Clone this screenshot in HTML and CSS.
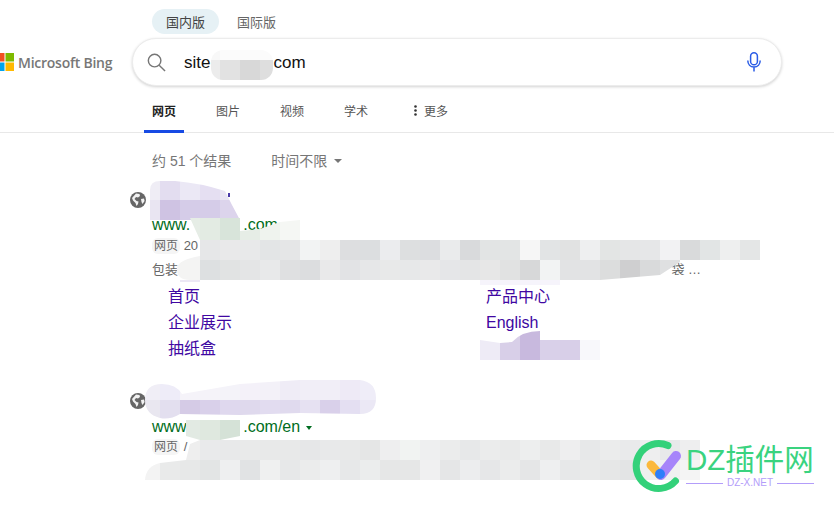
FILE: index.html
```html
<!DOCTYPE html>
<html lang="zh-CN">
<head>
    <meta charset="UTF-8">
    <title>site - 搜索</title>
    <link rel="stylesheet" href="styles.css">
</head>
<body>
    <div class="page">
        <div class="regionTabs">
            <span class="regionTab regionTabActive">国内版</span>
            <span class="regionTab">国际版</span>
        </div>

        <div class="searchRow">
            <div class="brand">
                <svg class="brandLogo" width="18" height="18" viewBox="0 0 18 18">
                    <rect width="8.5" height="8.5" fill="#f25022"/>
                    <rect x="9.5" width="8.5" height="8.5" fill="#7fba00"/>
                    <rect y="9.5" width="8.5" height="8.5" fill="#00a4ef"/>
                    <rect x="9.5" y="9.5" width="8.5" height="8.5" fill="#ffb900"/>
                </svg>
                <span class="brandName">Microsoft Bing</span>
            </div>
            <div class="searchBox">
                <svg class="searchIcon" width="19" height="19" viewBox="0 0 20 20" fill="none" stroke="#767676" stroke-width="1.5">
                    <circle cx="8" cy="8" r="6.6"/>
                    <path d="M12.8 12.8 L19 19"/>
                </svg>
                <span class="searchText">site<span class="searchGap"></span>com</span>
                <svg class="micIcon" width="14" height="20" viewBox="0 0 14 20" fill="none" stroke="#2a5ce6" stroke-width="1.5">
                    <rect x="3.6" y="0.8" width="6.8" height="12" rx="3.4"/>
                    <path d="M0.8 8.5 C0.8 12.5 3.4 15 7 15 C10.6 15 13.2 12.5 13.2 8.5 M7 15 V19.5"/>
                </svg>
            </div>
        </div>

        <nav class="mainNav">
            <a class="navItem navItemActive">网页</a>
            <a class="navItem">图片</a>
            <a class="navItem">视频</a>
            <a class="navItem">学术</a>
            <a class="navItem navMore">
                <svg class="moreDots" width="3" height="11" viewBox="0 0 3 11" fill="#333">
                    <circle cx="1.5" cy="1.5" r="1.3"/>
                    <circle cx="1.5" cy="5.5" r="1.3"/>
                    <circle cx="1.5" cy="9.5" r="1.3"/>
                </svg>更多
            </a>
        </nav>

        <div class="resultInfo">
            <span>约 51 个结果</span>
            <span class="timeFilter">时间不限<i class="caretGray"></i></span>
        </div>

        <div class="result resultFirst">
            <div class="resultTitle">
                <svg class="globeIcon" width="16" height="16" viewBox="0 0 16 16">
                    <circle cx="8" cy="8" r="8" fill="#666"/>
                    <path d="M6 1.5 L9.5 2 L10 4 L8 5.5 L6 5 L4.5 7 L6.5 9 L8.5 9.5 L8 12 L6.5 14 L5.5 11 L3 8.5 L2 6 Z M11 7 L14 6.5 L14.6 9 L12.5 12 L11.5 10 Z" fill="#f2f2f2"/>
                </svg>
                <a class="titleLink">&nbsp;</a>
            </div>
            <div class="resultUrl">www.<span class="urlGap"></span>.com</div>
            <div class="resultMeta"><span class="metaTag">网页</span> 20</div>
            <div class="resultSnippet"><span>包装</span><span>袋 …</span></div>
            <div class="siteLinks">
                <a>首页</a>
                <a>产品中心</a>
                <a>企业展示</a>
                <a>English</a>
                <a>抽纸盒</a>
            </div>
        </div>

        <div class="result resultSecond">
            <div class="resultTitle">
                <svg class="globeIcon" width="16" height="16" viewBox="0 0 16 16">
                    <circle cx="8" cy="8" r="8" fill="#666"/>
                    <path d="M6 1.5 L9.5 2 L10 4 L8 5.5 L6 5 L4.5 7 L6.5 9 L8.5 9.5 L8 12 L6.5 14 L5.5 11 L3 8.5 L2 6 Z M11 7 L14 6.5 L14.6 9 L12.5 12 L11.5 10 Z" fill="#f2f2f2"/>
                </svg>
                <a class="titleLink">&nbsp;</a>
            </div>
            <div class="resultUrl">www.<span class="urlGap"></span>.com/en<i class="caretGreen"></i></div>
            <div class="resultMeta"><span class="metaTag">网页</span> /</div>
        </div>

        <!-- 打码区域 -->
        <svg class="mosaic" width="834" height="506" viewBox="0 0 834 506" shape-rendering="crispEdges">
            <defs>
                <clipPath id="clipSearch"><rect x="211" y="50" width="62" height="30" rx="12"/></clipPath>
                <clipPath id="clipTitleOne"><path d="M150 190 Q150 181 160 181 L175 181 Q200 183 225 191 L232 205 L240 220 L150 220 Z"/></clipPath>
                <clipPath id="clipGreenOne"><path d="M190 218 H240 V231 L260 229 L280 222 L300 220 V240 H200 Z"/></clipPath>
                <clipPath id="clipRowOne"><path d="M200 240 H760 V260 H680 L680 262 L660 275 L600 280 H190 Q176 280 177 268 Q178 260 200 256 Z"/></clipPath>
                <clipPath id="clipProduct"><path d="M480 340 L500 343 L512 342 Q522 331 540 331 V340 H600 V360 H480 Z"/></clipPath>
                <clipPath id="clipTitleTwo"><path d="M145 400 Q145 384 162 384 Q176 384 182 394 L240 384 L300 380 H360 Q376 382 376 398 Q376 414 360 414 L300 413 L240 415 L180 414 Q170 420 160 418 Q145 414 145 400 Z"/></clipPath>
                <clipPath id="clipGreenTwo"><path d="M186 420 H240 V436 L220 440 H200 L186 436 Z"/></clipPath>
                <clipPath id="clipRowTwo"><path d="M200 440 H700 V480 H145 Q146 466 160 463 L186 460 L190 444 Z"/></clipPath>
            </defs>

            <rect x="152" y="209" width="6" height="2" fill="#3a2aa0"/>
            <rect x="228" y="193" width="2" height="4" fill="#4a3aa8"/>

            <g clip-path="url(#clipSearch)">
                <rect x="200" y="50" width="20" height="10" fill="#f8f8f8"/>
                <rect x="220" y="50" width="60" height="10" fill="#fbfbfb"/>
                <rect x="200" y="60" width="20" height="20" fill="#ececec"/>
                <rect x="220" y="60" width="20" height="20" fill="#e2e2e2"/>
                <rect x="240" y="60" width="20" height="20" fill="#d8d8d8"/>
                <rect x="260" y="60" width="20" height="20" fill="#dedede"/>
            </g>

            <g clip-path="url(#clipTitleOne)">
                <rect x="150" y="180" width="10" height="20" fill="#efedf5"/>
                <rect x="160" y="180" width="20" height="20" fill="#e3ddf0"/>
                <rect x="180" y="180" width="20" height="20" fill="#ebe8f5"/>
                <rect x="200" y="180" width="20" height="20" fill="#e5dff2"/>
                <rect x="220" y="180" width="20" height="20" fill="#e9e5f3"/>
                <rect x="150" y="200" width="10" height="20" fill="#e9e5f2"/>
                <rect x="160" y="200" width="20" height="20" fill="#cfc3e3"/>
                <rect x="180" y="200" width="20" height="20" fill="#d5cce8"/>
                <rect x="200" y="200" width="20" height="20" fill="#d5cce8"/>
                <rect x="220" y="200" width="20" height="20" fill="#dcd4ec"/>
            </g>

            <g clip-path="url(#clipGreenOne)">
                <rect x="180" y="215" width="20" height="25" fill="#e6ede6"/>
                <rect x="200" y="215" width="20" height="25" fill="#e3ebe3"/>
                <rect x="220" y="215" width="20" height="25" fill="#d8e4da"/>
                <rect x="240" y="215" width="20" height="25" fill="#e6ede6"/>
                <rect x="260" y="215" width="20" height="25" fill="#eff3ee"/>
                <rect x="280" y="215" width="20" height="25" fill="#f5f7f4"/>
            </g>

            <g clip-path="url(#clipRowOne)">
                <rect x="180" y="240" width="20" height="20" fill="#f3f3f3"/>
                <rect x="200" y="240" width="20" height="20" fill="#e6e7e8"/>
                <rect x="220" y="240" width="20" height="20" fill="#e9e9ea"/>
                <rect x="240" y="240" width="20" height="20" fill="#e8e9ea"/>
                <rect x="260" y="240" width="20" height="20" fill="#e3e5e6"/>
                <rect x="280" y="240" width="20" height="20" fill="#e5e6e7"/>
                <rect x="300" y="240" width="20" height="20" fill="#f2f3f3"/>
                <rect x="320" y="240" width="20" height="20" fill="#eeeeee"/>
                <rect x="340" y="240" width="20" height="20" fill="#dddee0"/>
                <rect x="360" y="240" width="20" height="20" fill="#dcdee0"/>
                <rect x="380" y="240" width="20" height="20" fill="#ebecee"/>
                <rect x="400" y="240" width="20" height="20" fill="#dddfe0"/>
                <rect x="420" y="240" width="20" height="20" fill="#dcdde0"/>
                <rect x="440" y="240" width="20" height="20" fill="#eaebec"/>
                <rect x="460" y="240" width="20" height="20" fill="#d9dadc"/>
                <rect x="480" y="240" width="20" height="20" fill="#e2e4e4"/>
                <rect x="500" y="240" width="20" height="20" fill="#e3e5e5"/>
                <rect x="520" y="240" width="20" height="20" fill="#f6f6f6"/>
                <rect x="540" y="240" width="20" height="20" fill="#e2e4e5"/>
                <rect x="560" y="240" width="20" height="20" fill="#e1e2e2"/>
                <rect x="580" y="240" width="20" height="20" fill="#eeeff0"/>
                <rect x="600" y="240" width="20" height="20" fill="#e3e5e4"/>
                <rect x="620" y="240" width="20" height="20" fill="#e5e6e7"/>
                <rect x="640" y="240" width="20" height="20" fill="#e6e7e8"/>
                <rect x="660" y="240" width="20" height="20" fill="#f2f2f3"/>
                <rect x="680" y="240" width="20" height="20" fill="#d9dadb"/>
                <rect x="700" y="240" width="20" height="20" fill="#e2e5e5"/>
                <rect x="720" y="240" width="20" height="20" fill="#eeefef"/>
                <rect x="740" y="240" width="20" height="20" fill="#e4e6e6"/>

                <rect x="170" y="260" width="30" height="20" fill="#f4f4f3"/>
                <rect x="200" y="260" width="20" height="20" fill="#dde0e1"/>
                <rect x="220" y="260" width="20" height="20" fill="#e1e3e3"/>
                <rect x="240" y="260" width="20" height="20" fill="#e4e5e6"/>
                <rect x="260" y="260" width="20" height="20" fill="#e8e9ea"/>
                <rect x="280" y="260" width="20" height="20" fill="#dfe0e1"/>
                <rect x="300" y="260" width="20" height="20" fill="#dcdddf"/>
                <rect x="320" y="260" width="20" height="20" fill="#e9e9ea"/>
                <rect x="340" y="260" width="20" height="20" fill="#e2e3e5"/>
                <rect x="360" y="260" width="20" height="20" fill="#e6e7e8"/>
                <rect x="380" y="260" width="20" height="20" fill="#e8e9e9"/>
                <rect x="400" y="260" width="20" height="20" fill="#e7e8e9"/>
                <rect x="420" y="260" width="20" height="20" fill="#e9e9ea"/>
                <rect x="440" y="260" width="20" height="20" fill="#e5e6e8"/>
                <rect x="460" y="260" width="20" height="20" fill="#e4e5e6"/>
                <rect x="480" y="260" width="20" height="20" fill="#e7e7e7"/>
                <rect x="500" y="260" width="20" height="20" fill="#e1e2e2"/>
                <rect x="520" y="260" width="20" height="20" fill="#d7d8d9"/>
                <rect x="540" y="260" width="20" height="20" fill="#f2f3f3"/>
                <rect x="560" y="260" width="20" height="20" fill="#e2e3e4"/>
                <rect x="580" y="260" width="20" height="20" fill="#e2e3e4"/>
                <rect x="600" y="260" width="20" height="20" fill="#dcdddd"/>
                <rect x="620" y="260" width="20" height="20" fill="#cfcfd0"/>
                <rect x="640" y="260" width="20" height="20" fill="#d9dadb"/>
                <rect x="660" y="260" width="20" height="20" fill="#dfe0e1"/>
            </g>

            <rect x="660" y="275" width="50" height="8" fill="#fff"/>
            <rect x="480" y="280" width="80" height="5" fill="#f6f4fb"/>
            <rect x="180" y="280" width="20" height="2" fill="#ece8f5"/>

            <g clip-path="url(#clipProduct)">
                <rect x="480" y="331" width="20" height="29" fill="#eeebf6"/>
                <rect x="500" y="331" width="20" height="29" fill="#d8cfe8"/>
                <rect x="520" y="331" width="20" height="29" fill="#c8b9de"/>
                <rect x="540" y="331" width="20" height="29" fill="#d9d0e9"/>
                <rect x="560" y="331" width="20" height="29" fill="#d8cfe8"/>
                <rect x="580" y="331" width="20" height="29" fill="#f8f8fb"/>
            </g>

            <g clip-path="url(#clipTitleTwo)">
                <rect x="140" y="380" width="20" height="20" fill="#f0eef6"/>
                <rect x="160" y="380" width="20" height="20" fill="#eeecf8"/>
                <rect x="180" y="380" width="20" height="20" fill="#f5f3f9"/>
                <rect x="200" y="380" width="20" height="20" fill="#f5f3f9"/>
                <rect x="220" y="380" width="20" height="20" fill="#f4f3f9"/>
                <rect x="240" y="380" width="20" height="20" fill="#f4f1f9"/>
                <rect x="260" y="380" width="20" height="20" fill="#f3f1f8"/>
                <rect x="280" y="380" width="20" height="20" fill="#efecf6"/>
                <rect x="300" y="380" width="20" height="20" fill="#f1eef7"/>
                <rect x="320" y="380" width="20" height="20" fill="#f1eef7"/>
                <rect x="340" y="380" width="20" height="20" fill="#eeeaf6"/>
                <rect x="360" y="380" width="20" height="20" fill="#efedf8"/>
                <rect x="140" y="400" width="20" height="20" fill="#e9e7f0"/>
                <rect x="160" y="400" width="20" height="20" fill="#e3dfef"/>
                <rect x="180" y="400" width="20" height="20" fill="#d5cbe6"/>
                <rect x="200" y="400" width="20" height="20" fill="#d9d0ea"/>
                <rect x="220" y="400" width="20" height="20" fill="#dfd8ee"/>
                <rect x="240" y="400" width="20" height="20" fill="#dfd9ed"/>
                <rect x="260" y="400" width="20" height="20" fill="#e2dcf0"/>
                <rect x="280" y="400" width="20" height="20" fill="#e0daee"/>
                <rect x="300" y="400" width="20" height="20" fill="#e6e1f2"/>
                <rect x="320" y="400" width="20" height="20" fill="#d9d0ea"/>
                <rect x="340" y="400" width="20" height="20" fill="#e4dff2"/>
                <rect x="360" y="400" width="20" height="20" fill="#ebe8f5"/>
            </g>

            <g clip-path="url(#clipGreenTwo)">
                <rect x="180" y="420" width="20" height="20" fill="#e2eae3"/>
                <rect x="200" y="420" width="20" height="20" fill="#dfe8df"/>
                <rect x="220" y="420" width="20" height="20" fill="#d5e2d7"/>
            </g>

            <g clip-path="url(#clipRowTwo)">
                <rect x="180" y="440" width="20" height="20" fill="#eeeeee"/>
                <rect x="200" y="440" width="20" height="20" fill="#e9eaeb"/>
                <rect x="220" y="440" width="20" height="20" fill="#e8e9ea"/>
                <rect x="240" y="440" width="20" height="20" fill="#e9eaea"/>
                <rect x="260" y="440" width="20" height="20" fill="#e8e9e9"/>
                <rect x="280" y="440" width="20" height="20" fill="#e8e9e9"/>
                <rect x="300" y="440" width="20" height="20" fill="#e6e7e8"/>
                <rect x="320" y="440" width="20" height="20" fill="#e8e9ea"/>
                <rect x="340" y="440" width="20" height="20" fill="#e8e9e9"/>
                <rect x="360" y="440" width="20" height="20" fill="#e5e6e6"/>
                <rect x="380" y="440" width="20" height="20" fill="#eeeeef"/>
                <rect x="400" y="440" width="20" height="20" fill="#f1f3f2"/>
                <rect x="420" y="440" width="20" height="20" fill="#eeeff0"/>
                <rect x="440" y="440" width="20" height="20" fill="#ebecec"/>
                <rect x="460" y="440" width="20" height="20" fill="#e7e8e9"/>
                <rect x="480" y="440" width="20" height="20" fill="#ebecec"/>
                <rect x="500" y="440" width="20" height="20" fill="#e9eaea"/>
                <rect x="520" y="440" width="20" height="20" fill="#edeeee"/>
                <rect x="540" y="440" width="20" height="20" fill="#e8e9e9"/>
                <rect x="560" y="440" width="20" height="20" fill="#eeeeef"/>
                <rect x="580" y="440" width="20" height="20" fill="#e7e8e9"/>
                <rect x="600" y="440" width="20" height="20" fill="#ebecec"/>
                <rect x="620" y="440" width="20" height="20" fill="#e9eaeb"/>
                <rect x="640" y="440" width="20" height="20" fill="#eeeeef"/>
                <rect x="660" y="440" width="20" height="20" fill="#e8e9ea"/>
                <rect x="680" y="440" width="20" height="20" fill="#eeeeef"/>

                <rect x="140" y="460" width="20" height="20" fill="#f3f3f3"/>
                <rect x="160" y="460" width="20" height="20" fill="#e9eaea"/>
                <rect x="180" y="460" width="20" height="20" fill="#e7e8e8"/>
                <rect x="200" y="460" width="20" height="20" fill="#e3e5e5"/>
                <rect x="220" y="460" width="20" height="20" fill="#eeeff0"/>
                <rect x="240" y="460" width="20" height="20" fill="#e1e3e4"/>
                <rect x="260" y="460" width="20" height="20" fill="#eff0f0"/>
                <rect x="280" y="460" width="20" height="20" fill="#e7e8e9"/>
                <rect x="300" y="460" width="20" height="20" fill="#ebecec"/>
                <rect x="320" y="460" width="20" height="20" fill="#eeeff0"/>
                <rect x="340" y="460" width="20" height="20" fill="#e7e8e9"/>
                <rect x="360" y="460" width="20" height="20" fill="#ebeded"/>
                <rect x="380" y="460" width="20" height="20" fill="#e6e7e7"/>
                <rect x="400" y="460" width="20" height="20" fill="#e6e7e7"/>
                <rect x="420" y="460" width="20" height="20" fill="#f0f0f1"/>
                <rect x="440" y="460" width="20" height="20" fill="#e5e6e7"/>
                <rect x="460" y="460" width="20" height="20" fill="#ecedee"/>
                <rect x="480" y="460" width="20" height="20" fill="#e6e7e8"/>
                <rect x="500" y="460" width="20" height="20" fill="#ebecec"/>
                <rect x="520" y="460" width="20" height="20" fill="#e5e6e7"/>
                <rect x="540" y="460" width="20" height="20" fill="#eeeff0"/>
                <rect x="560" y="460" width="20" height="20" fill="#e7e8e9"/>
                <rect x="580" y="460" width="20" height="20" fill="#e9eaea"/>
                <rect x="600" y="460" width="20" height="20" fill="#e6e7e7"/>
                <rect x="620" y="460" width="20" height="20" fill="#e3e4e5"/>
                <rect x="640" y="460" width="20" height="20" fill="#eef0ef"/>
                <rect x="660" y="460" width="20" height="20" fill="#f0f1f1"/>
                <rect x="680" y="460" width="20" height="20" fill="#f4f4f4"/>
            </g>
        </svg>

        <!-- 水印 -->
        <div class="watermark">
            <svg class="watermarkLogo" width="54" height="54" viewBox="0 0 54 54" fill="none" stroke-linecap="round">
                <path d="M36 6.5 A22.5 22.5 0 1 0 43.5 42" stroke="#33d17a" stroke-width="7"/>
                <path d="M19 26 L28 36" stroke="#fbb93c" stroke-width="9"/>
                <path d="M29 36 L44 17" stroke="#a685fa" stroke-width="10"/>
                <circle cx="28" cy="35" r="5" fill="#2d7ff9"/>
            </svg>
            <div class="watermarkText">
                <div class="watermarkName">DZ插件网</div>
                <div class="watermarkUrl"><i></i><span>DZ-X.NET</span><i></i></div>
            </div>
        </div>
    </div>
</body>
</html>
```

FILE: styles.css
```css
* {
    box-sizing: border-box;
}

html, body {
    margin: 0;
    padding: 0;
    background-color: #fff;
}

body {
    font-family: "Liberation Sans", "Noto Sans CJK SC", sans-serif;
    color: #444;
    overflow: hidden;
}

.page {
    position: relative;
    width: 834px;
    height: 506px;
    overflow: hidden;
}

/* 顶部 国内版/国际版 */
.regionTabs {
    display: flex;
    align-items: center;
    gap: 18px;
    height: 25px;
    margin-top: 9px;
    margin-left: 152px;
    font-size: 13px;
}

.regionTab {
    color: #666;
}

.regionTabActive {
    display: flex;
    align-items: center;
    justify-content: center;
    width: 67px;
    height: 25px;
    border-radius: 13px;
    background-color: #e6f1f5;
    color: #444;
}

/* logo + 搜索框 */
.searchRow {
    display: flex;
    align-items: center;
    height: 48px;
    margin-top: 4px;
    margin-left: -4px;
}

.brand {
    display: flex;
    align-items: center;
    gap: 4px;
    width: 136px;
    flex-shrink: 0;
}

.brandName {
    font-family: "Open Sans", "Liberation Sans", sans-serif;
    font-size: 14px;
    font-weight: 600;
    letter-spacing: -0.25px;
    color: #777;
    white-space: nowrap;
}

.searchBox {
    display: flex;
    align-items: center;
    width: 650px;
    height: 48px;
    padding-left: 14px;
    padding-right: 20px;
    border: 1px solid #ececec;
    border-radius: 24px;
    box-shadow: 0 1px 3px rgba(0, 0, 0, 0.18);
    background-color: #fff;
}

.searchIcon {
    flex-shrink: 0;
}

.searchText {
    margin-left: 18px;
    padding-top: 2px;
    font-size: 17px;
    color: #111;
    white-space: nowrap;
}

.searchGap {
    display: inline-block;
    width: 63px;
}

.micIcon {
    margin-left: auto;
}

/* 导航 */
.mainNav {
    display: flex;
    gap: 40px;
    height: 47px;
    padding-left: 152px;
    border-bottom: 1px solid #e8e8e8;
    font-size: 12px;
}

.navItem {
    position: relative;
    display: flex;
    align-items: center;
    height: 46px;
    padding-top: 2px;
    color: #555;
}

.navItemActive {
    color: #222;
    font-weight: bold;
}

.navItemActive::after {
    content: "";
    position: absolute;
    left: -8px;
    right: -8px;
    bottom: -1px;
    height: 3px;
    background-color: #174ae4;
}

.navMore {
    margin-left: 6px;
}

.moreDots {
    margin-right: 7px;
}

/* 结果数 */
.resultInfo {
    display: flex;
    gap: 40px;
    height: 20px;
    margin-top: 18px;
    margin-left: 152px;
    font-size: 14px;
    line-height: 20px;
    color: #767676;
}

.timeFilter {
    display: flex;
    align-items: center;
}

.caretGray {
    width: 0;
    height: 0;
    margin-left: 7px;
    border-left: 4px solid transparent;
    border-right: 4px solid transparent;
    border-top: 4px solid #767676;
}

/* 结果 */
.result {
    padding-left: 130px;
}

.resultFirst {
    margin-top: 17px;
}

.resultSecond {
    margin-top: 27px;
}

.resultTitle {
    display: flex;
    align-items: center;
    gap: 6px;
    height: 24px;
}

.titleLink {
    font-size: 16px;
    color: #4007a2;
}

.resultUrl {
    height: 21px;
    margin-top: 2px;
    padding-left: 22px;
    font-size: 16px;
    line-height: 21px;
    color: #006d21;
    white-space: nowrap;
}

.resultSecond .resultUrl {
    margin-top: 3px;
}

.urlGap {
    display: inline-block;
    width: 53px;
}

.caretGreen {
    display: inline-block;
    width: 0;
    height: 0;
    margin-left: 6px;
    margin-bottom: 2px;
    border-left: 3.5px solid transparent;
    border-right: 3.5px solid transparent;
    border-top: 4px solid #006d21;
}

.resultMeta {
    height: 22px;
    padding-left: 22px;
    font-size: 13px;
    line-height: 22px;
    color: #666;
}

.resultSecond .resultMeta {
    margin-top: -1px;
}

.metaTag {
    display: inline-block;
    height: 16px;
    padding: 0 2px;
    border-radius: 6px;
    background-color: #f5f5f5;
    font-size: 12px;
    line-height: 16px;
}

.resultSnippet {
    display: flex;
    justify-content: space-between;
    width: 549px;
    height: 24px;
    margin-top: 1px;
    margin-left: 22px;
    font-size: 13px;
    line-height: 24px;
    color: #666;
}

.siteLinks {
    display: grid;
    grid-template-columns: 318px 318px;
    margin-top: 2px;
    padding-left: 38px;
    font-size: 16px;
    line-height: 26px;
    color: #4007a2;
}

/* 打码 */
.mosaic {
    position: absolute;
    left: 0;
    top: 0;
    pointer-events: none;
}

/* 水印 */
.watermark {
    position: absolute;
    left: 632px;
    top: 439px;
    display: flex;
}

.watermarkText {
    width: 128px;
    padding-top: 4px;
}

.watermarkName {
    font-size: 29.5px;
    line-height: 34px;
    color: #3ad37f;
    white-space: nowrap;
}

.watermarkUrl {
    display: flex;
    align-items: center;
    gap: 4px;
    height: 12px;
    font-size: 10px;
    line-height: 12px;
    color: #b39dfa;
    white-space: nowrap;
}

.watermarkUrl i {
    flex: 1;
    height: 1px;
    background-color: #b39dfa;
}
```
